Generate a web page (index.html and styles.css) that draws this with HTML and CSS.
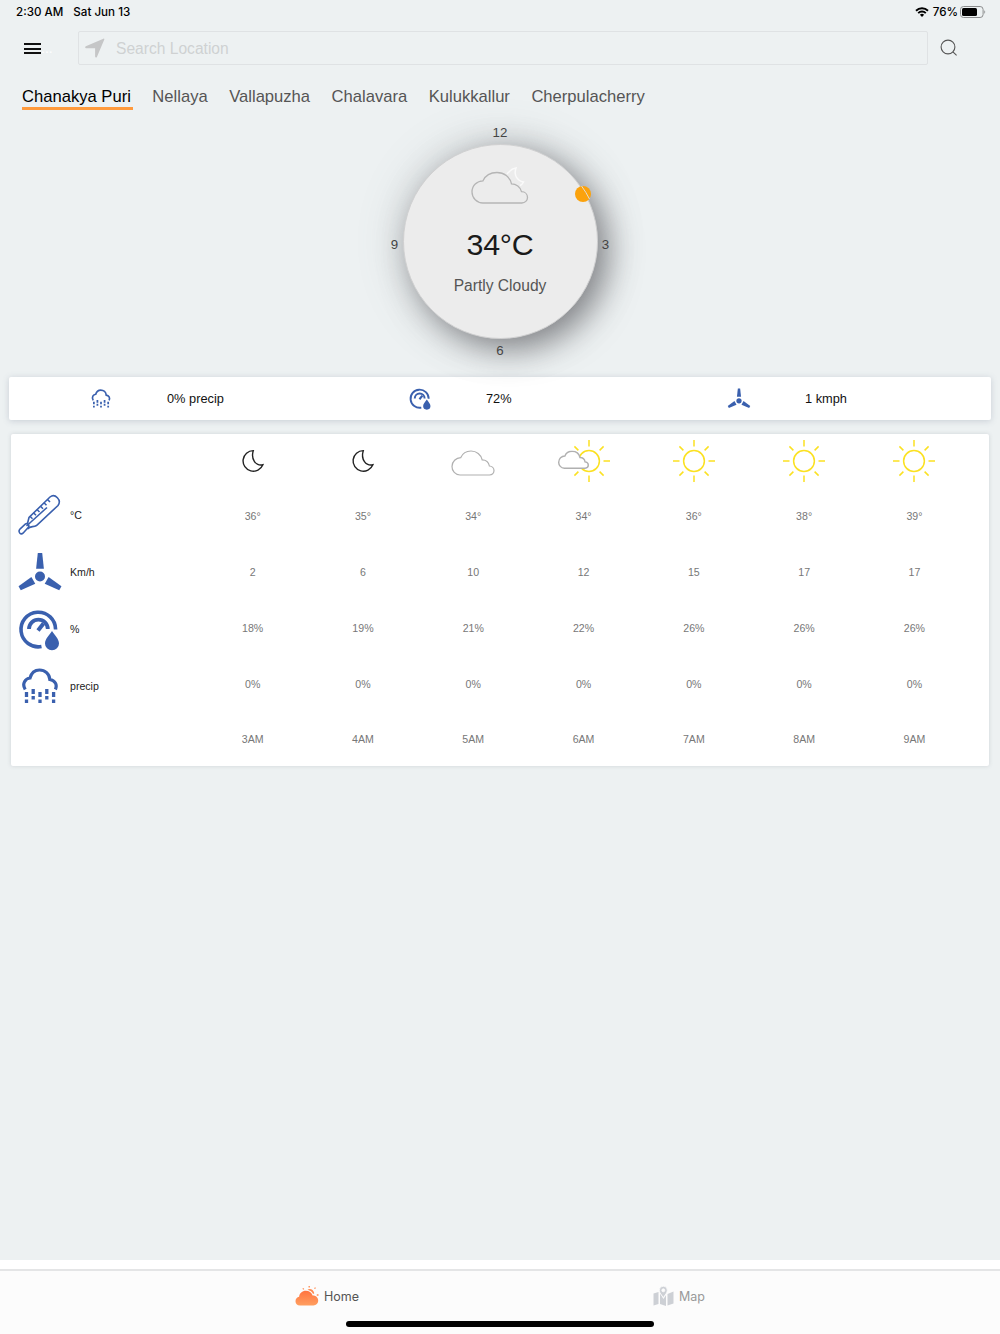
FILE: index.html
```html
<!DOCTYPE html>
<html lang="en">
    <head>
        <meta charset="UTF-8" />
        <meta name="viewport" content="width=device-width, initial-scale=1.0" />
        <title>Weather</title>
        <link rel="stylesheet" href="styles.css" />
    </head>
    <body>
        <!-- Shared icons -->
        <svg class="sprite" width="0" height="0">
            <symbol id="moon" viewBox="0 0 24 24">
                <path d="M12.3 1.6 A10.3 10.3 0 1 0 21.9 15.8 C15 17.2 9.5 10.5 12.3 1.6 Z" />
            </symbol>
            <symbol id="cloud" viewBox="0 0 44 26">
                <path d="M9 25 A8.2 8.2 0 0 1 1 16.5 C1 11.5 5 7.8 9.8 7.6 C11.5 3.6 15.5 1 20 1 C25.5 1 30 4.6 31.2 9.8 C34.8 9.8 37.8 12.4 38.4 16 C41 16.2 43 18.2 43 20.6 C43 23 41 25 38.5 25 Z" />
            </symbol>
            <symbol id="sun" viewBox="0 0 42 42">
                <circle cx="21" cy="21" r="10.4" />
                <path d="M21 0v6.5M21 35.5V42M0 21h6.5M35.5 21H42M6.4 6.4l4 4M31.6 31.6l4 4M6.4 35.6l4-4M31.6 10.4l4-4" />
            </symbol>
            <symbol id="turbine" viewBox="0 0 44 40">
                <circle cx="22" cy="24.5" r="5" />
                <path d="M19.8 1h4.4l1.7 15.8h-7.8z" />
                <path d="M19.8 1h4.4l1.7 15.8h-7.8z" transform="rotate(120 22 24.5)" />
                <path d="M19.8 1h4.4l1.7 15.8h-7.8z" transform="rotate(240 22 24.5)" />
            </symbol>
            <symbol id="humidity" viewBox="0 0 42 42">
                <path d="M23.5 37.5 A17.3 17.3 0 1 1 37.6 20.5" fill="none" stroke="currentColor" stroke-width="3.6" />
                <path d="M11 20 A9.3 9.3 0 0 1 29.8 20" fill="none" stroke="currentColor" stroke-width="3.8" />
                <path d="M20 21.5 L25.5 14.5" fill="none" stroke="currentColor" stroke-width="4" />
                <path d="M34 22 C36.500 26 41 30 41 34.500 A7 6.800 0 0 1 27 34.500 C27 30 31.500 26 34 22 Z" />
            </symbol>
            <symbol id="rain" viewBox="0 0 36 36">
                <path d="M3.2 21.5 C-.5 15.5 3.500 10.500 8 10 C9.500 4.500 13 2 17.500 2 C23 2 27.500 6 27.800 11.500 C33 12.500 35.600 16.500 33.400 21.500" fill="none" stroke="currentColor" stroke-width="3.200" />
                <path d="M4.500 24v5M4.500 31.500v3.500M11.200 21v5M11.200 28v3.500M18 24v5M18 31.500v3.500M24.800 21v5M24.800 28v3.500M31.600 24v5M31.600 31.500v3.500" fill="none" stroke="currentColor" stroke-width="3.300" />
            </symbol>
        </svg>

        <div class="status-bar">
            <span class="time">2:30 AM</span>
            <span class="date">Sat Jun 13</span>
            <svg class="wifi" width="14" height="10" viewBox="0 0 14 10">
                <path d="M1 3.7a8.6 8.6 0 0 1 12 0M3.2 6.1a5.4 5.4 0 0 1 7.6 0" fill="none" stroke="#000" stroke-width="1.9" />
                <path d="M7 10 4.9 7.8a3 3 0 0 1 4.2 0z" />
            </svg>
            <span class="charge">76%</span>
            <svg width="26" height="12" viewBox="0 0 26 12">
                <rect x=".5" y=".5" width="22.6" height="11" rx="3" fill="none" stroke="#8b8d8e" />
                <rect x="2" y="2" width="15" height="8" rx="1.5" />
                <path d="M24.3 4.2c1.2.6 1.2 3 0 3.6z" fill="#8b8d8e" />
            </svg>
        </div>

        <header class="header">
            <button class="menu" aria-label="Menu"><i></i><i></i><i></i></button>
            <span class="dots">...</span>
            <div class="search">
                <svg width="20" height="20" viewBox="0 0 20 20">
                    <path d="M.8 8.2 18.4.7c.7-.3 1.2.2.9.9L11.9 18.9c-.4 1-1.8.8-1.8-.3V10.2H1.2C0 10.1-.2 8.7.8 8.2z" fill="#c5c6c7" />
                </svg>
                <input type="text" placeholder="Search Location" />
            </div>
            <svg class="find" width="18" height="18" viewBox="0 0 18 18">
                <circle cx="8" cy="8" r="6.9" />
                <path d="M12.9 12.9 16.6 16.4" />
            </svg>
        </header>

        <nav class="places">
            <a class="active">Chanakya Puri</a>
            <a>Nellaya</a>
            <a>Vallapuzha</a>
            <a>Chalavara</a>
            <a>Kulukkallur</a>
            <a>Cherpulacherry</a>
        </nav>

        <section class="clock">
            <span class="h12">12</span>
            <span class="h9">9</span>
            <div class="dial">
                <svg class="now" width="58" height="38" viewBox="0 0 58 38">
                    <path class="crescent" d="M36 7 C38 4.5 41 1.5 45 1 C42.5 8 46 13.5 52.5 15 C51.5 17 50.5 18 49 18.5" />
                    <path d="M12 36 A11 11 0 0 1 1 25 C1 18.500 6 14 12 13.800 C14.500 8.300 19.500 5.500 26 5.500 C33 5.500 39 10 40.500 16.800 C45 16.800 49.500 20 50.500 24.700 C54 24.800 56.500 27.200 56.500 30.400 C56.500 33.600 54 36 50.800 36 Z" />
                </svg>
                <div class="temp">34°C</div>
                <div class="sky">Partly Cloudy</div>
                <svg class="marker" width="18" height="18" viewBox="0 0 18 18">
                    <circle cx="9" cy="9" r="8" fill="#fba20c" />
                    <path d="M7.500 1 Q12 7 15.500 14" fill="none" stroke="#e4ded4" />
                </svg>
            </div>
            <span class="h3">3</span>
            <span class="h6">6</span>
        </section>

        <section class="current">
            <div class="stat">
                <svg width="24" height="19"><use href="#rain" /></svg>
                <span>0% precip</span>
            </div>
            <div class="stat">
                <svg width="24" height="22"><use href="#humidity" /></svg>
                <span>72%</span>
            </div>
            <div class="stat">
                <svg width="24" height="21"><use href="#turbine" /></svg>
                <span>1 kmph</span>
            </div>
        </section>

        <section class="hourly">
            <div class="row icons">
                <span></span>
                <svg class="moon" width="24" height="24"><use href="#moon" /></svg>
                <svg class="moon" width="24" height="24"><use href="#moon" /></svg>
                <svg class="cloud overcast" width="44" height="26"><use href="#cloud" /></svg>
                <svg width="52" height="42" viewBox="0 0 52 42">
                    <use class="sun" href="#sun" x="10" y="0" width="42" height="42" />
                    <use class="cloud front" href="#cloud" x="0" y="10.5" width="31" height="18.5" />
                </svg>
                <svg class="sun" width="42" height="42"><use href="#sun" /></svg>
                <svg class="sun" width="42" height="42"><use href="#sun" /></svg>
                <svg class="sun" width="42" height="42"><use href="#sun" /></svg>
            </div>
            <div class="row">
                <div class="label celsius">
                    <svg width="44" height="42" viewBox="0 0 44 42" fill="none" stroke="currentColor" stroke-width="1.6">
                        <path d="M9.500 29.500 L11 23.500 L32 3 C37 -1 44 6 40 11.500 L18.500 31.500 C15 33.500 12.500 31.500 9.500 35" />
                        <path d="M2.200 34.800 L7.500 30 C9.500 28.800 12 31.500 10.200 33.500 L5 39.200 C2.500 41.500 -.5 37.500 2.200 34.800 Z" />
                        <path d="M8.500 32 29 13.500" />
                        <path d="M12 22.200l2.500 2.500M15.500 18.800l2.500 2.500M19 15.500l2.500 2.500M22.500 12.200l2.500 2.500M26 8.800l2.500 2.500M29.500 5.500l2.500 2.500" />
                    </svg>
                    <span>°C</span>
                </div>
                <span>36°</span><span>35°</span><span>34°</span><span>34°</span><span>36°</span><span>38°</span><span>39°</span>
            </div>
            <div class="row">
                <div class="label">
                    <svg width="44" height="40"><use href="#turbine" /></svg>
                    <span>Km/h</span>
                </div>
                <span>2</span><span>6</span><span>10</span><span>12</span><span>15</span><span>17</span><span>17</span>
            </div>
            <div class="row">
                <div class="label humid">
                    <svg width="42" height="42"><use href="#humidity" /></svg>
                    <span>%</span>
                </div>
                <span>18%</span><span>19%</span><span>21%</span><span>22%</span><span>26%</span><span>26%</span><span>26%</span>
            </div>
            <div class="row">
                <div class="label precip">
                    <svg width="36" height="36"><use href="#rain" /></svg>
                    <span>precip</span>
                </div>
                <span>0%</span><span>0%</span><span>0%</span><span>0%</span><span>0%</span><span>0%</span><span>0%</span>
            </div>
            <div class="row hours">
                <span></span>
                <span>3AM</span><span>4AM</span><span>5AM</span><span>6AM</span><span>7AM</span><span>8AM</span><span>9AM</span>
            </div>
        </section>

        <footer class="footer">
            <div class="tabs">
                <a class="tab home">
                    <svg width="24" height="20" viewBox="0 0 24 20">
                        <defs>
                            <linearGradient id="warm" x1="0" y1="0" x2="0" y2="1">
                                <stop offset="0" stop-color="#ff7440" />
                                <stop offset="1" stop-color="#ff9f60" />
                            </linearGradient>
                        </defs>
                        <path d="M5 19.500C2 19.500.5 17.500.5 15.200c0-2.400 1.600-4 3.600-4.400C4.500 7.200 7.300 4.800 10.800 4.800c3.200 0 5.900 2 6.800 4.800 3.200-.2 5.600 2 5.600 5 0 2.900-2 4.900-4.800 4.900z" fill="url(#warm)" />
                        <path d="M12.500 3.700c2.500-1.600 6-.2 6.800 3.600l-1.200.6c-1-2-2.800-3.600-5.600-4.200z" fill="#ff8a50" />
                        <path d="M14.200 0v1.600M7.800 2.400l1 1M19.500 2.600l1-1M21.800 9h1.700" stroke="#ff8a50" stroke-width="1.300" />
                    </svg>
                    <span>Home</span>
                </a>
                <a class="tab map">
                    <svg width="21" height="20" viewBox="0 0 21 20" fill="#cdd0d5">
                        <path d="M.5 7.500 5.500 6v12L.5 19.500zM7 6.500l1 2.500 2.500 4 2.500-4v11L7 18zM14.500 8 20.500 5.500V17.500l-6 2z" />
                        <path fill-rule="evenodd" stroke="#fcfcfc" stroke-width=".8" d="M10.300.2a4 4 0 0 1 4 4c0 2.800-2.500 4.800-4 7.500-1.500-2.700-4-4.700-4-7.500a4 4 0 0 1 4-4zm0 2.600a1.500 1.500 0 1 0 0 3 1.500 1.500 0 0 0 0-3z" />
                    </svg>
                    <span>Map</span>
                </a>
            </div>
            <div class="home-bar"></div>
        </footer>
    </body>
</html>
```
FILE: styles.css
```css
* {
    box-sizing: border-box;
}
body {
    margin: 0;
    height: 1334px;
    display: flex;
    flex-direction: column;
    overflow: hidden;
    background-color: #edf1f2;
    font-family: 'Liberation Sans', Arial, sans-serif;
    color: #000;
}
svg {
    display: block;
    flex: none;
}
.sprite {
    position: absolute;
}

/* Status bar */
.status-bar {
    height: 24px;
    padding: 0 14px 0 16px;
    display: flex;
    align-items: center;
    font: 500 11.6px/24px Inter, sans-serif;
}
.date {
    margin-left: 10px;
}
.wifi {
    margin-left: auto;
}
.charge {
    margin: 0 2px 0 4px;
}

/* Search */
.header {
    height: 48px;
    padding: 7px 0 0 24px;
    display: flex;
    align-items: flex-start;
}
.menu {
    width: 17px;
    height: 11px;
    margin: 12px 0 0;
    padding: 0;
    border: none;
    background: none;
    display: flex;
    flex-direction: column;
    justify-content: space-between;
}
.menu i {
    width: 17px;
    height: 2px;
    background-color: #111;
}
.dots {
    width: 37px;
    color: #fff;
    font-size: 14px;
    line-height: 34px;
}
.search {
    width: 850px;
    height: 34px;
    padding-left: 6px;
    border: 1px solid #dfe2e4;
    border-radius: 2px;
    display: flex;
    align-items: center;
}
.search input {
    flex: 1;
    padding: 1px 0 0 11px;
    border: none;
    outline: none;
    background: none;
    font: 15.6px 'Liberation Sans', Arial, sans-serif;
}
.search input::placeholder {
    color: #cfd1d2;
}
.find {
    margin: 8px 0 0 12px;
    fill: none;
    stroke: #555;
    stroke-width: 1.1;
}

/* Places */
.places {
    height: 49px;
    padding: 14px 22px 0;
    display: flex;
    align-items: flex-start;
    gap: 19.5px;
}
.places a {
    height: 24px;
    padding-right: 2px;
    font-size: 16.6px;
    line-height: 21px;
    color: #555;
}
.places .active {
    color: #000;
    border-bottom: 3px solid #ff9a3c;
}

/* Dial */
.clock {
    height: 256px;
    display: grid;
    grid-template-columns: 16px 195px 16px;
    grid-template-rows: 23px 195px 23px;
    justify-content: center;
    font-size: 13.3px;
    color: #444;
    text-align: center;
}
.h12,
.h6 {
    grid-column: 1 / 4;
    line-height: 24px;
    z-index: 1;
}
.h9,
.h3 {
    line-height: 202px;
    z-index: 1;
}
.dial {
    position: relative;
    border: 1px solid #d0d0d1;
    border-radius: 50%;
    background-color: #ececec;
    box-shadow: 10px 10px 32px rgba(60, 60, 66, 0.55), 0 0 45px rgba(120, 125, 130, 0.3);
    display: flex;
    flex-direction: column;
    align-items: center;
}
.now {
    margin-top: 22px;
    fill: #ececec;
    stroke: #b5b5b5;
    stroke-width: 1.3;
}
.crescent {
    fill: none;
    stroke: #fafafa;
    stroke-width: 1.5;
}
.temp {
    margin-top: 21px;
    font-size: 30.4px;
    line-height: 36px;
    letter-spacing: -0.2px;
    color: #1a1a1a;
}
.sky {
    margin-top: 14px;
    font-size: 15.6px;
    line-height: 20px;
    color: #555;
}
.marker {
    position: absolute;
    top: 40px;
    right: 5px;
}

/* Current conditions */
.current {
    height: 43px;
    margin: 0 9px;
    padding-left: 80px;
    display: grid;
    grid-template-columns: repeat(3, 319px);
    align-items: center;
    background-color: #fff;
    border-radius: 2px;
    box-shadow: 0 1px 6px rgba(90, 105, 130, 0.25);
    color: #3a60ae;
    fill: #3a60ae;
}
.stat {
    display: flex;
    align-items: center;
    gap: 54px;
}
.stat span {
    font-size: 12.8px;
    color: #111;
}

/* Hourly forecast */
.hourly {
    height: 332px;
    margin: 14px 11px 0;
    background-color: #fff;
    border-radius: 2px;
    box-shadow: 0 0 4px rgba(90, 100, 115, 0.2);
    font-size: 10.6px;
    color: #777;
}
.row {
    height: 56px;
    display: grid;
    grid-template-columns: 186.5px repeat(7, 110.3px);
    align-items: center;
    justify-items: center;
}
.icons {
    height: 54px;
}
.hours {
    height: 54px;
}
.label {
    width: 100%;
    padding-left: 7px;
    display: flex;
    align-items: center;
    gap: 8px;
    color: #3a60ae;
    fill: #3a60ae;
}
.label span {
    color: #222;
}
.celsius {
    padding-bottom: 2px;
}
.humid {
    padding: 2px 0 0 7px;
    gap: 10px;
}
.humid svg {
    margin-top: 2px;
}
.precip {
    padding: 3px 0 0 11px;
    gap: 12px;
}
.moon {
    fill: none;
    stroke: #222;
    stroke-width: 1.4;
}
.cloud {
    fill: none;
    stroke: #b0b0b0;
    stroke-width: 1.2;
}
.overcast {
    margin-top: 3px;
}
.front {
    fill: #fff;
    stroke-width: 2;
}
.sun {
    fill: none;
    stroke: #fbe122;
    stroke-width: 1.5;
}

/* Bottom navigation */
.footer {
    height: 74px;
    margin-top: auto;
    border-top: 9px solid #fff;
    background-color: #fcfcfc;
}
.tabs {
    height: 52px;
    border-top: 2px solid #e4e5e6;
    display: flex;
    align-items: center;
    justify-content: center;
    gap: 294px;
    font: 12.5px Inter, sans-serif;
}
.tab {
    display: flex;
    align-items: center;
    gap: 5px;
}
.home {
    color: #555;
}
.map {
    color: #999;
}
.home-bar {
    width: 308px;
    height: 6px;
    margin: 0 auto;
    border-radius: 3px;
    background-color: #000;
}
```
